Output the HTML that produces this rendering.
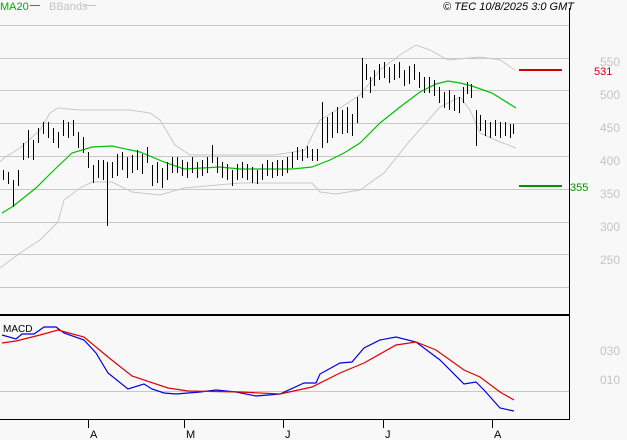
<!DOCTYPE html>
<html><head><meta charset="utf-8"><style>
html,body{margin:0;padding:0;background:#f8f8f8;}
svg{display:block;font-family:"Liberation Sans",sans-serif;}
</style></head><body>
<svg width="627" height="440" viewBox="0 0 627 440" xmlns="http://www.w3.org/2000/svg">
<rect width="627" height="440" fill="#f8f8f8"/>
<g stroke="#c8c8c8" stroke-width="1">
<line x1="0" y1="25.5" x2="569" y2="25.5"/>
<line x1="0" y1="58.5" x2="569" y2="58.5"/>
<line x1="0" y1="90.5" x2="569" y2="90.5"/>
<line x1="0" y1="123.5" x2="569" y2="123.5"/>
<line x1="0" y1="156.5" x2="569" y2="156.5"/>
<line x1="0" y1="189.5" x2="569" y2="189.5"/>
<line x1="0" y1="222.5" x2="569" y2="222.5"/>
<line x1="0" y1="254.5" x2="569" y2="254.5"/>
<line x1="0" y1="287.5" x2="569" y2="287.5"/>
<line x1="0" y1="391.5" x2="569" y2="391.5"/>
</g>
<line x1="569.5" y1="8" x2="569.5" y2="419" stroke="#000"/>
<line x1="0" y1="315" x2="569" y2="315" stroke="#000" stroke-width="2"/>
<line x1="0" y1="419.5" x2="570" y2="419.5" stroke="#000"/>
<g stroke="#000"><line x1="88.5" y1="419" x2="88.5" y2="428"/><line x1="184.5" y1="419" x2="184.5" y2="428"/><line x1="283.5" y1="419" x2="283.5" y2="428"/><line x1="383.5" y1="419" x2="383.5" y2="428"/><line x1="492.5" y1="419" x2="492.5" y2="428"/></g>
<g font-size="11" fill="#000"><text x="90" y="438">A</text><text x="186" y="438">M</text><text x="285" y="438">J</text><text x="385" y="438">J</text><text x="494" y="438">A</text></g>
<g font-size="12" fill="#c4c4c4"><text x="600" y="66">550</text><text x="600" y="99">500</text><text x="600" y="132">450</text><text x="600" y="165">400</text><text x="600" y="198">350</text><text x="600" y="231">300</text><text x="600" y="264">250</text><text x="600" y="355">030</text><text x="600" y="384">010</text></g>
<text x="0" y="10" font-size="11" fill="#00b000">MA20</text><line x1="30" y1="5.5" x2="40" y2="5.5" stroke="#00b000"/>
<text x="49" y="10" font-size="11" fill="#c4c4c4">BBands</text><line x1="85" y1="5.5" x2="96" y2="5.5" stroke="#c4c4c4"/>
<text x="574" y="10" font-size="11" font-style="italic" fill="#000" text-anchor="end">© TEC 10/8/2025 3:0 GMT</text>
<line x1="519" y1="70" x2="562" y2="70" stroke="#cc0000" stroke-width="2"/>
<text x="594" y="75" font-size="11" fill="#cc0000">531</text>
<line x1="519" y1="186" x2="562" y2="186" stroke="#009000" stroke-width="2"/>
<text x="570" y="191" font-size="11" fill="#009000">355</text>
<g fill="none" stroke="#c8c8c8" stroke-width="1">
<polyline points="0,162 4,158 20,148 40,130 50,113 58,108 80,110 130,110 150,113 160,120 175,145 190,155 240,155 275,155 305,150 320,120 340,108 360,95 380,70 400,55 416,45 430,50 448,60 480,57 500,60 515,70"/>
<polyline points="0,268 4,265 20,253 40,240 58,222 64,200 80,188 92,182 112,182 132,192 160,195 184,188 240,183 312,183 320,192 336,194 360,190 384,173 408,143 440,107 460,97 470,110 480,133 500,142 516,148"/>
</g>
<polyline fill="none" stroke="#00c000" stroke-width="1.2" points="2,213 12,207 36,188 52,172 72,153 92,147 112,146 140,152 164,162 184,169 220,167 240,169 292,169 312,167 330,160 344,153 360,143 380,123 400,107 420,92 436,84 448,81 460,83 472,86 492,93 516,108"/>
<g stroke="#000" stroke-width="1" fill="none" transform="translate(0.5,0)">
<path d="M3 170V180M8 172V184M13 180V207M18 170V186M23 143V160M28 130V158M33 140V160M38 128V143M43 122V134M48 122V138M53 128V143M58 132V148M63 120V136M68 122V138M73 120V136M78 132V148M83 137V153M88 152V168M93 165V183M98 160V178M103 160V180M107 162V226M112 162V178M117 154V176M122 152V170M127 157V178M132 155V173M137 150V170M142 154V174M147 147V163M152 165V186M157 162V183M162 168V188M167 162V180M172 157V173M177 157V173M182 160V176M187 162V178M192 157V173M197 162V178M202 160V176M207 157V173M212 145V163M217 157V173M222 162V178M227 164V180M232 170V186M237 164V180M242 162V178M247 164V180M252 167V183M257 170V184M262 164V180M267 160V176M272 162V178M277 160V176M282 160V176M287 157V173M292 152V168M297 147V160M302 149V161M307 146V158M312 149V161M317 149V161M322 102V148M327 117V143M332 112V138M337 107V133M342 110V134M347 107V133M352 114V136M357 97V123M362 58V98M366 64V80M370 77V93M374 70V86M379 64V80M384 62V78M389 67V83M394 64V80M399 62V78M404 70V86M409 66V84M414 64V80M419 72V88M424 77V93M429 77V93M434 80V96M439 87V103M444 92V108M449 90V110M454 95V111M459 97V113M463 87V103M467 82V94M471 84V98M476 110V146M480 115V131M485 120V136M490 122V138M495 120V136M500 122V138M505 122V136M510 124V138M513 124V134"/>
</g>
<text x="3" y="332" font-size="10" fill="#000">MACD</text>
<polyline fill="none" stroke="#0000e0" stroke-width="1.2" points="2,335 16,339 22,334 34,334 44,327 56,327 64,333 84,340 96,353 108,373 128,389 144,384 152,389 164,393 176,394 200,392 216,390 236,392 256,396 280,394 304,383 316,383 320,374 340,363 352,362 364,348 380,340 396,337 416,342 440,360 464,384 476,382 484,390 500,408 514,411"/>
<polyline fill="none" stroke="#e00000" stroke-width="1.2" points="2,343 16,341 40,335 58,330 84,337 108,357 132,376 168,388 188,391 240,392 280,394 312,387 340,373 364,363 396,345 416,342 436,350 464,370 480,377 500,392 514,400"/>
</svg>
</body></html>
